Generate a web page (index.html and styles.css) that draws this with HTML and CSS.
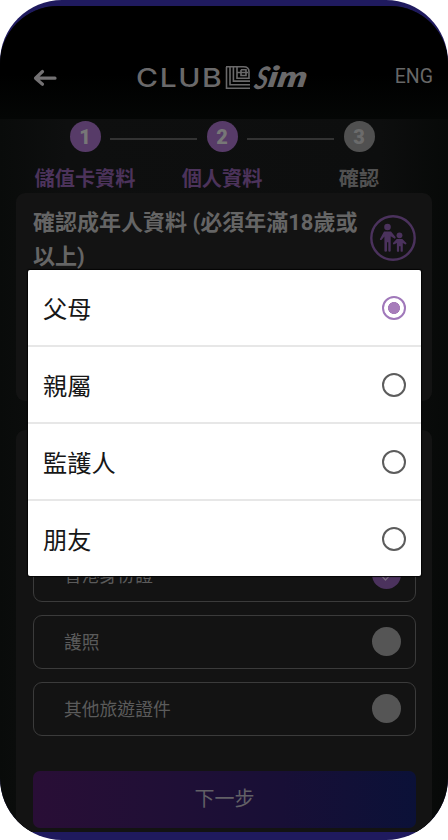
FILE: index.html
```html
<!DOCTYPE html>
<html lang="zh-Hant">
<head>
<meta charset="utf-8">
<title>CLUB SIM</title>
<link rel="stylesheet" href="styles.css">
</head>
<body>
<div class="phone">
  <div class="screen">
    <header class="header">
      <svg class="back" width="24" height="18" viewBox="0 0 24 18"><path d="M9.5 2.5 2.5 9.2l7 6M3 9.2h19"/></svg>
      <svg class="logo" width="176" height="44" viewBox="0 -7 176 44">
        <text class="club" transform="translate(1 24.7) scale(1.2 1)" textLength="71.5" lengthAdjust="spacing">CLUB</text>
        <path class="mark" d="M91.5 5v21.2H115M95 5.3v17.4H115M98.4 5.3v13.8h16.6M91 4.8h17.5q5.5 0 5.5 5v6.5h-12V4.8M102 10.5h11M106 7.8v5.7h5V7.8h-5"/>
        <text class="sim-s" transform="translate(118 26.5) skewX(-14) scale(.82 1)">S</text>
        <text class="sim" transform="translate(132 24.5) skewX(-10)" textLength="39" lengthAdjust="spacingAndGlyphs">im</text>
      </svg>
      <span class="lang">ENG</span>
    </header>
    <div class="steps">
      <div class="step"><b class="num">1</b><span>儲值卡資料</span></div>
      <i class="line"></i>
      <div class="step"><b class="num">2</b><span>個人資料</span></div>
      <i class="line"></i>
      <div class="step idle"><b class="num">3</b><span>確認</span></div>
    </div>
    <section class="card adult">
      <h1>確認成年人資料 (必須年滿18歲或以上)</h1>
      <svg class="family" width="46" height="46" viewBox="0 0 46 46">
        <circle class="ring" cx="23" cy="23" r="21.7"/>
        <circle cx="17.5" cy="12" r="3.3"/>
        <path d="M14 16.5h7l4.5 5.4q.6 1.2-.7 1.8l-4.1-2.5v14.6q0 1-1.2 1t-1.2-1v-8.5h-1.3v8.5q0 1-1.3 1t-1.3-1V21.5l-2.7 3.3q-1.4.8-1.9-.6Z"/>
        <circle cx="29.5" cy="20.3" r="2.9"/>
        <path d="M26.7 24h5.6l4.1 4q.5 1.2-1 1.4l-2.6-1.5v8q0 .9-1.1.9t-1.1-.9v-4.7h-1.5v4.7q0 .9-1.1.9t-1.1-.9v-8l-3 1.5q-1.3-.2-.9-1.4Z"/>
      </svg>
    </section>
    <section class="card identity">
      <div class="option"><span>香港身份證</span><i class="dot picked"><svg width="29" height="29" viewBox="0 0 29 29"><path d="m8 14 5.5 6 5.5-6-3-4"/></svg></i></div>
      <div class="option"><span>護照</span><i class="dot"></i></div>
      <div class="option"><span>其他旅遊證件</span><i class="dot"></i></div>
      <div class="next">下一步</div>
    </section>
  </div>
  <div class="dialog">
    <div class="choice"><span>父母</span><i class="radio on"></i></div>
    <div class="choice"><span>親屬</span><i class="radio"></i></div>
    <div class="choice"><span>監護人</span><i class="radio"></i></div>
    <div class="choice"><span>朋友</span><i class="radio"></i></div>
  </div>
</div>
</body>
</html>
```

FILE: styles.css
```css
* { box-sizing: border-box; }
body { margin: 0; background: #fff; font-family: Roboto, "Noto Sans CJK TC", sans-serif; }
.phone { position: relative; width: 448px; height: 840px; padding: 6px 0 8px; border-radius: 62px; overflow: hidden; background: #1f1a5e; }
.screen { height: 826px; overflow: hidden; border-radius: 58px 58px 0 0; background: linear-gradient(90deg, #090b0a, #0e0f0f 15%, #0d0e0e 85%, #070908); }
.header { display: flex; justify-content: space-between; align-items: center; height: 113px; padding: 29px 16px 0 33px; background: linear-gradient(#000 60%, #040605); }
.back { margin-top: 2px; fill: none; stroke: #737173; stroke-width: 3.2; stroke-linecap: round; stroke-linejoin: round; }
.logo { margin-left: 26px; margin-right: 32px; overflow: visible; }
.logo text { fill: #6a696a; }
.club { font: 500 25px Inter, sans-serif; }
.mark { fill: none; stroke: #6a696a; stroke-width: 1.6; }
.sim-s { font: italic 700 31px Lato, sans-serif; }
.sim { font: italic 800 29px Lato, sans-serif; }
.lang { margin-right: -1px; font-size: 19.5px; line-height: 24px; color: #676767; }
.steps { display: flex; justify-content: center; height: 74px; padding: 2px 4px 0 0; }
.step { display: flex; flex-direction: column; align-items: center; width: 50px; font-size: 20.2px; line-height: 30px; font-weight: 700; white-space: nowrap; color: #4c335b; }
.step span { margin-top: 12px; }
.num { width: 31px; height: 31px; border-radius: 50%; background: #573b68; color: #777; line-height: 32px; text-align: center; font-size: 20px; }
.idle { color: #515151; }
.idle .num { background: #505050; color: #6b6b6b; }
.line { width: 87px; height: 2px; margin-top: 17px; background: #333; }
.card { margin: 0 16px; background: #131313; border-radius: 9px; }
.adult { display: flex; justify-content: space-between; height: 208px; padding: 13px 16px 0 17px; }
h1 { width: 332px; margin: 0; font-size: 22px; line-height: 34px; font-weight: 700; color: #656565; }
.family { margin-top: 9px; fill: #4b325d; }
.ring { fill: none; stroke: #4b325d; stroke-width: 2.4; }
.identity { display: flex; flex-direction: column; gap: 13px; height: 420px; margin-top: 29px; padding: 118px 16px 0 17px; border-radius: 9px 9px 0 0; }
.option { display: flex; flex-shrink: 0; justify-content: space-between; align-items: center; height: 54px; padding: 0 14px 0 30px; border: 1px solid #3b3b3b; border-radius: 9px; font-size: 17.8px; color: #5b5b5b; }
.option span { margin-top: -2px; }
.dot { width: 29px; height: 29px; margin-top: -1px; border-radius: 50%; background: #555; }
.picked { background: #4b325d; }
.picked svg { display: block; fill: none; stroke: #77697d; stroke-width: 1.2; }
.next { flex-shrink: 0; height: 57px; margin-top: 22px; border-radius: 7px; background: linear-gradient(90deg, #290e36, #210f36 30%, #180f36 65%, #0b1138); font-size: 20px; line-height: 57px; text-align: center; color: #626066; }
.dialog { position: absolute; left: 28px; top: 270px; width: 393px; height: 306px; display: flex; flex-direction: column; border-radius: 2px; background: #fff; box-shadow: 0 0 1px 1px #050505; }
.choice { display: flex; flex: 1; justify-content: space-between; align-items: center; padding: 1px 15px 0; border-bottom: 2px solid #e7e7e7; font-size: 24.2px; color: #171717; }
.choice:last-child { border-bottom: 0; }
.choice span { margin-top: -1px; }
.radio { width: 24px; height: 24px; border: 2.4px solid #5c5c5c; border-radius: 50%; margin-top: -1px; }
.on { border-color: #a078ba; background: radial-gradient(circle, #a67cba 0 5.7px, #fff 6.3px); }
```
